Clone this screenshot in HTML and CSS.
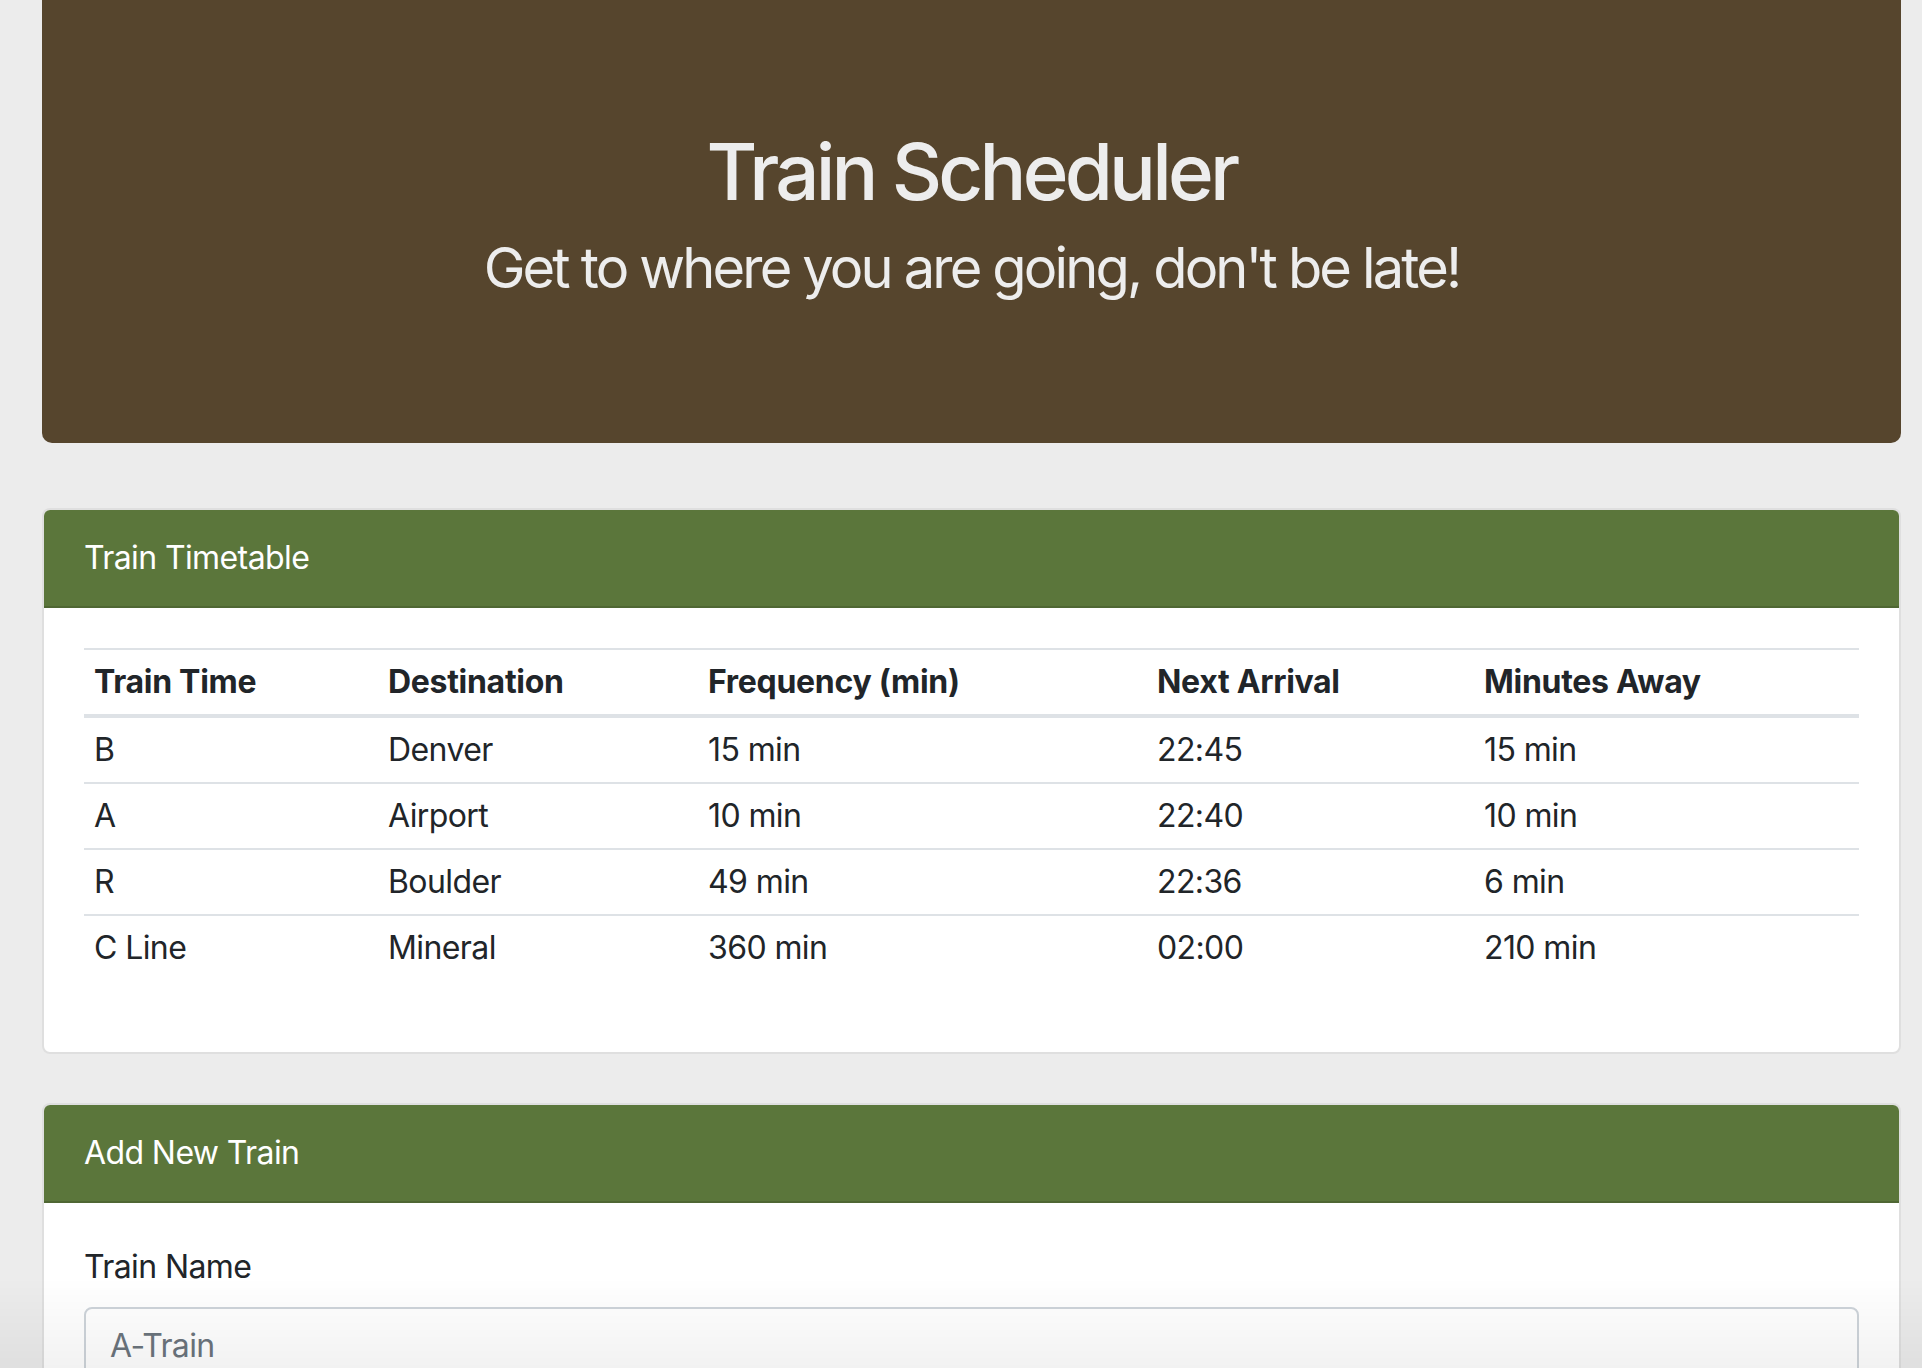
FILE: index.html
```html
<!DOCTYPE html>
<html lang="en">
<head>
<meta charset="utf-8">
<title>Train Scheduler</title>
<link rel="stylesheet" href="styles.css">
</head>
<body>
<div class="container">
  <header class="jumbotron">
    <h1 class="title">Train Scheduler</h1>
    <h2 class="subtitle">Get to where you are going, don't be late!</h2>
  </header>

  <section class="card card-first">
    <div class="card-header">Train Timetable</div>
    <div class="card-body">
      <table class="table">
        <colgroup>
          <col class="c1"><col class="c2"><col class="c3"><col class="c4"><col class="c5">
        </colgroup>
        <thead>
          <tr><th>Train Time</th><th>Destination</th><th>Frequency (min)</th><th>Next Arrival</th><th>Minutes Away</th></tr>
        </thead>
        <tbody>
          <tr><td>B</td><td>Denver</td><td>15 min</td><td>22:45</td><td>15 min</td></tr>
          <tr><td>A</td><td>Airport</td><td>10 min</td><td>22:40</td><td>10 min</td></tr>
          <tr><td>R</td><td>Boulder</td><td>49 min</td><td>22:36</td><td>6 min</td></tr>
          <tr><td>C Line</td><td>Mineral</td><td>360 min</td><td>02:00</td><td>210 min</td></tr>
        </tbody>
      </table>
    </div>
  </section>

  <section class="card card-second">
    <div class="card-header">Add New Train</div>
    <div class="card-body">
      <form class="form">
        <label class="label" for="train-name">Train Name</label>
        <input class="input" id="train-name" type="text" placeholder="A-Train">
      </form>
    </div>
  </section>
</div>
<div class="fade"></div>
</body>
</html>
```

FILE: styles.css
```css
* { box-sizing: border-box; }

html, body {
  margin: 0;
  padding: 0;
}

body {
  background: #ececec;
  color: #212529;
  font-family: Inter, "Noto Sans", "Liberation Sans", sans-serif;
  font-size: 32px;
  line-height: 48px;
  letter-spacing: -0.6px;
  overflow: hidden;
  height: 1368px;
}

.container {
  margin-left: 42px;
  width: 1859px;
}

.jumbotron {
  background: #56452d;
  height: 443px;
  border-radius: 0 0 10px 10px;
  padding-top: 125px;
  text-align: center;
  color: #ededed;
}

.title {
  margin: 0 0 16px;
  font-size: 78px;
  line-height: 94px;
  font-weight: 500;
  letter-spacing: -3.8px;
}

.subtitle {
  margin: 0;
  font-size: 56px;
  line-height: 67px;
  font-weight: 400;
  letter-spacing: -2.85px;
}

.card {
  background: #fff;
  border: 2px solid rgba(0, 0, 0, 0.125);
  border-radius: 8px;
  overflow: hidden;
}

.card-first { margin-top: 65px; }
.card-second { margin-top: 49px; }

.card-header {
  background: #5b763b;
  color: #fff;
  padding: 24px 40px;
  line-height: 48px;
  border-bottom: 2px solid rgba(0, 0, 0, 0.125);
}

.card-body {
  padding: 40px;
}

.table {
  width: 100%;
  border-collapse: collapse;
  table-layout: fixed;
  margin-bottom: 32px;
}

.c1 { width: 294px; }
.c2 { width: 320px; }
.c3 { width: 449px; }
.c4 { width: 327px; }
.c5 { width: 385px; }

.table th,
.table td {
  text-align: left;
  padding: 8px 10px;
  line-height: 48px;
  white-space: nowrap;
}

.table th {
  font-weight: 700;
  letter-spacing: -0.3px;
  border-top: 2px solid #dee2e6;
  border-bottom: 4px solid #dee2e6;
}

.table tbody tr + tr td {
  border-top: 2px solid #dee2e6;
}

.form {
  display: flex;
  flex-direction: column;
}

.label {
  margin-bottom: 16px;
  line-height: 48px;
}

.input {
  display: block;
  width: 100%;
  height: 76px;
  padding: 12px 24px;
  font-family: inherit;
  font-size: 32px;
  line-height: 48px;
  letter-spacing: -0.6px;
  color: #495057;
  background: #fff;
  border: 2px solid #ced4da;
  border-radius: 8px;
  outline: none;
}

.input::placeholder {
  color: #6c757d;
  opacity: 1;
}

.fade {
  position: fixed;
  left: 0;
  right: 0;
  bottom: 0;
  height: 90px;
  background: linear-gradient(to bottom, rgba(0, 0, 0, 0), rgba(0, 0, 0, 0.05));
  pointer-events: none;
}
```
